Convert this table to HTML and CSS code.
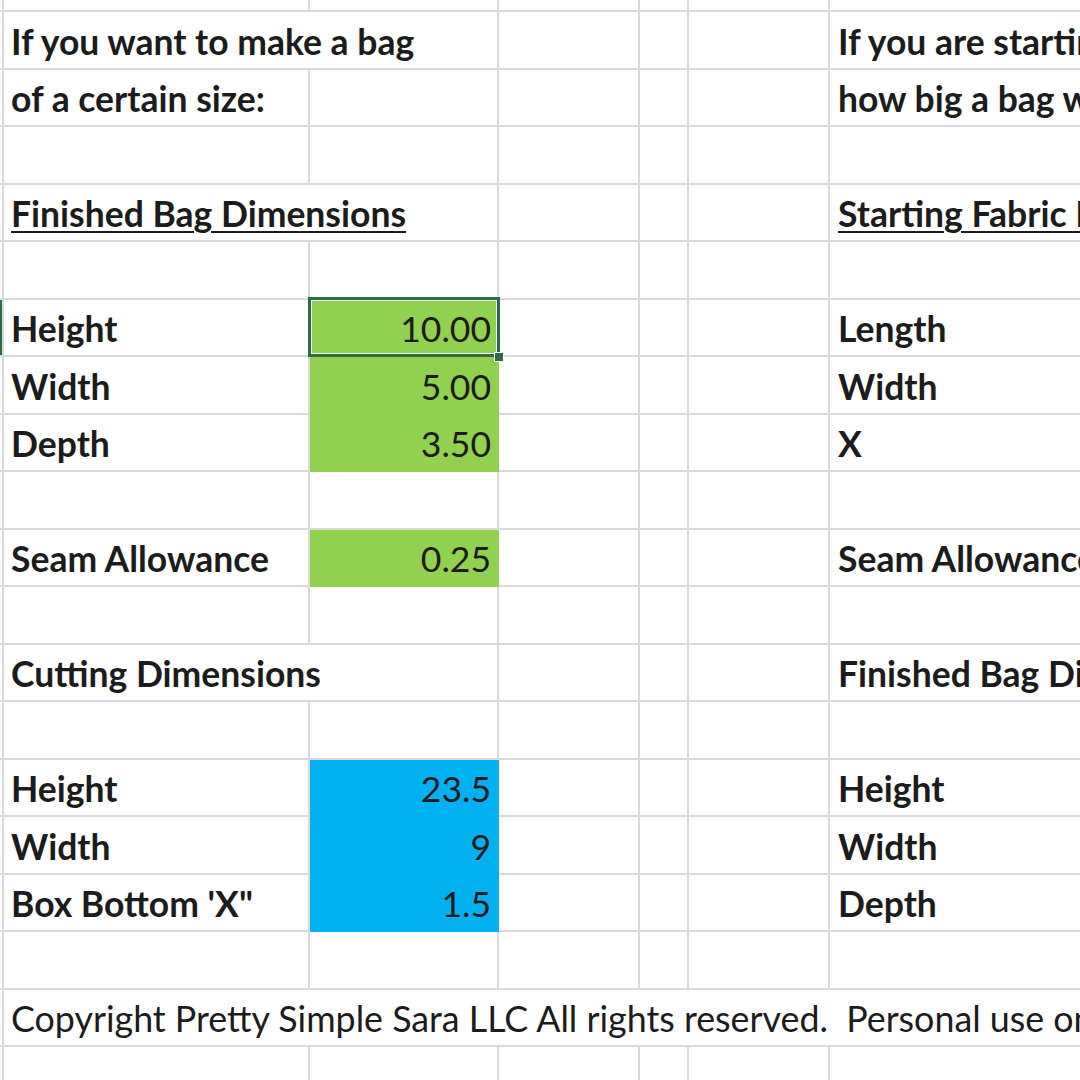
FILE: index.html
```html
<!DOCTYPE html>
<html lang="en">
<head>
<meta charset="utf-8">
<title>Bag Size Calculator</title>
<link rel="stylesheet" href="styles.css">
</head>
<body>
<div class="sheet">
  <div class="row top"><div class="c h"></div><div class="c"></div><div class="c"></div><div class="c"></div><div class="c"></div><div class="c"></div><div class="c"></div></div>

  <div class="row"><div class="c h"></div><div class="c b s2">If you want to make a bag</div><div class="c"></div><div class="c"></div><div class="c"></div><div class="c b g">If you are starting with a piece of fabric,</div></div>
  <div class="row"><div class="c h"></div><div class="c b">of a certain size:</div><div class="c"></div><div class="c"></div><div class="c"></div><div class="c"></div><div class="c b g">how big a bag will it make?</div></div>
  <div class="row"><div class="c h"></div><div class="c"></div><div class="c"></div><div class="c"></div><div class="c"></div><div class="c"></div><div class="c"></div></div>
  <div class="row"><div class="c h"></div><div class="c b u s2">Finished Bag Dimensions</div><div class="c"></div><div class="c"></div><div class="c"></div><div class="c b u g">Starting Fabric Dimensions</div></div>
  <div class="row"><div class="c h"></div><div class="c"></div><div class="c"></div><div class="c"></div><div class="c"></div><div class="c"></div><div class="c"></div></div>

  <div class="row"><div class="c h hsel"></div><div class="c b">Height</div><div class="c num green sel">10.00</div><div class="c"></div><div class="c"></div><div class="c"></div><div class="c b g">Length</div></div>
  <div class="row"><div class="c h"></div><div class="c b">Width</div><div class="c num green">5.00</div><div class="c"></div><div class="c"></div><div class="c"></div><div class="c b g">Width</div></div>
  <div class="row"><div class="c h"></div><div class="c b">Depth</div><div class="c num green">3.50</div><div class="c"></div><div class="c"></div><div class="c"></div><div class="c b g">X</div></div>
  <div class="row"><div class="c h"></div><div class="c"></div><div class="c"></div><div class="c"></div><div class="c"></div><div class="c"></div><div class="c"></div></div>
  <div class="row"><div class="c h"></div><div class="c b">Seam Allowance</div><div class="c num green">0.25</div><div class="c"></div><div class="c"></div><div class="c"></div><div class="c b g">Seam Allowance</div></div>
  <div class="row"><div class="c h"></div><div class="c"></div><div class="c"></div><div class="c"></div><div class="c"></div><div class="c"></div><div class="c"></div></div>
  <div class="row"><div class="c h"></div><div class="c b s2">Cutting Dimensions</div><div class="c"></div><div class="c"></div><div class="c"></div><div class="c b g">Finished Bag Dimensions</div></div>
  <div class="row"><div class="c h"></div><div class="c"></div><div class="c"></div><div class="c"></div><div class="c"></div><div class="c"></div><div class="c"></div></div>

  <div class="row"><div class="c h"></div><div class="c b">Height</div><div class="c num blue">23.5</div><div class="c"></div><div class="c"></div><div class="c"></div><div class="c b g">Height</div></div>
  <div class="row"><div class="c h"></div><div class="c b">Width</div><div class="c num blue">9</div><div class="c"></div><div class="c"></div><div class="c"></div><div class="c b g">Width</div></div>
  <div class="row"><div class="c h"></div><div class="c b">Box Bottom 'X"</div><div class="c num blue">1.5</div><div class="c"></div><div class="c"></div><div class="c"></div><div class="c b g">Depth</div></div>
  <div class="row"><div class="c h"></div><div class="c"></div><div class="c"></div><div class="c"></div><div class="c"></div><div class="c"></div><div class="c"></div></div>
  <div class="row"><div class="c h"></div><div class="c all">Copyright Pretty Simple Sara LLC All rights reserved.&nbsp; Personal use only.</div></div>
  <div class="row"><div class="c h"></div><div class="c"></div><div class="c"></div><div class="c"></div><div class="c"></div><div class="c"></div><div class="c"></div></div>
</div>
</body>
</html>
```
FILE: styles.css
```css
html, body {
  margin: 0;
  padding: 0;
  background: #ffffff;
  overflow: hidden;
}

body {
  width: 1080px;
  height: 1080px;
  font-family: Lato, "Open Sans", "Liberation Sans", sans-serif;
  color: #1c1c1c;
}

.sheet {
  display: flex;
  flex-direction: column;
  width: 1300px;
}

.row {
  display: grid;
  grid-template-columns: 4px 306px 189px 141px 49px 141px 470px;
  height: 57.5px;
  flex: none;
}

.row.top {
  height: 12px;
}

.c {
  box-sizing: border-box;
  border-right: 2px solid #dadada;
  border-bottom: 2px solid #dadada;
  display: flex;
  align-items: center;
  padding: 3px 7px 0 7px;
  font-size: 35.5px;
  line-height: 1;
  white-space: nowrap;
  min-width: 0;
  overflow: hidden;
}

.c.h {
  padding: 0;
}

.c.hsel {
  background: linear-gradient(to right, #217346 0 2px, transparent 2px);
}

.s2 {
  grid-column: span 2;
}

.all {
  grid-column: 2 / 8;
  font-size: 35.8px;
}

.g {
  padding-left: 8px;
}

.b {
  font-weight: 700;
}

.u {
  text-decoration: underline;
  text-decoration-thickness: 2px;
  text-underline-offset: 4px;
}

.num {
  justify-content: flex-end;
  font-weight: 400;
  padding-right: 6px;
}

.green {
  background: #92d050;
  border-color: #92d050;
}

.blue {
  background: #00b0f0;
  border-color: #00b0f0;
}

.sel {
  position: relative;
  overflow: visible;
}

.sel::after {
  content: "";
  position: absolute;
  left: -2px;
  top: -3px;
  right: -3px;
  bottom: -2px;
  border: 3px solid #2e6b4a;
  box-shadow: inset 0 0 0 1px #ffffff;
  pointer-events: none;
}

.sel::before {
  content: "";
  position: absolute;
  right: -7px;
  bottom: -7px;
  width: 8px;
  height: 8px;
  background: #2e6b4a;
  border: 1px solid #ffffff;
  z-index: 1;
}
```
